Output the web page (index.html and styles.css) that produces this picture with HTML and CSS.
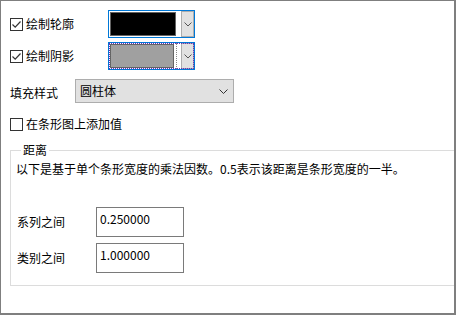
FILE: index.html
```html
<!DOCTYPE html>
<html>
<head>
<meta charset="utf-8">
<link rel="stylesheet" href="styles.css">
</head>
<body>
<div class="frame">
  <div class="row row-outline">
    <label class="check">
      <span class="box"><svg width="11" height="11" viewBox="0 0 11 11"><polyline points="1.5,5.5 4.2,8.2 9.5,2.5" fill="none" stroke="#333" stroke-width="1.2"/></svg></span>
      <span class="text">绘制轮廓</span>
    </label>
    <div class="color-combo">
      <span class="swatch swatch-black"></span>
      <span class="drop"><svg width="8" height="5" viewBox="0 0 8 5"><polyline points="0.5,0.5 4,4 7.5,0.5" fill="none" stroke="#555" stroke-width="1"/></svg></span>
    </div>
  </div>
  <div class="row row-shadow">
    <label class="check">
      <span class="box"><svg width="11" height="11" viewBox="0 0 11 11"><polyline points="1.5,5.5 4.2,8.2 9.5,2.5" fill="none" stroke="#333" stroke-width="1.2"/></svg></span>
      <span class="text">绘制阴影</span>
    </label>
    <div class="color-combo focused">
      <span class="swatch-wrap"><span class="swatch swatch-gray"></span></span>
      <span class="drop"><svg width="8" height="5" viewBox="0 0 8 5"><polyline points="0.5,0.5 4,4 7.5,0.5" fill="none" stroke="#555" stroke-width="1"/></svg></span>
    </div>
  </div>
  <div class="row row-fill">
    <span class="fill-label">填充样式</span>
    <div class="combo">
      <span class="combo-text">圆柱体</span>
      <svg class="chev" width="9" height="5" viewBox="0 0 9 5"><polyline points="0.5,0.5 4.5,4.5 8.5,0.5" fill="none" stroke="#333" stroke-width="1"/></svg>
    </div>
  </div>
  <div class="row row-values">
    <label class="check">
      <span class="box"></span>
      <span class="text">在条形图上添加值</span>
    </label>
  </div>
  <fieldset class="group">
    <legend>距离</legend>
    <p class="desc">以下是基于单个条形宽度的乘法因数。0.5表示该距离是条形宽度的一半。</p>
    <div class="fields">
      <span class="field-label">系列之间</span>
      <div class="textbox">0.250000</div>
      <span class="field-label">类别之间</span>
      <div class="textbox">1.000000</div>
    </div>
  </fieldset>
</div>
</body>
</html>
```

FILE: styles.css
```css
html, body {
  margin: 0;
  padding: 0;
  background: #fff;
}
body {
  font-family: "Noto Sans CJK SC", "Microsoft YaHei", "Noto Sans", sans-serif;
  font-size: 12px;
  color: #000;
}
.frame {
  width: 456px;
  height: 315px;
  box-sizing: border-box;
  border: 1px solid #7f7f7f;
  border-right-width: 2px;
  border-bottom-width: 2px;
  overflow: hidden;
}
.row {
  display: flex;
  align-items: center;
}
.row-outline {
  margin-top: 9px;
  height: 28px;
}
.row-shadow {
  margin-top: 4px;
  height: 28px;
}
.check {
  display: flex;
  align-items: center;
  padding-left: 9px;
  width: 98px;
  line-height: 16px;
}
.box {
  width: 11px;
  height: 11px;
  border: 1px solid #333;
  margin-right: 3px;
  display: flex;
  align-items: center;
  justify-content: center;
  background: #fff;
}
.color-combo {
  width: 85px;
  height: 26px;
  border: 1px solid #0078d7;
  display: flex;
  align-items: stretch;
}
.swatch {
  display: block;
  box-sizing: border-box;
  border: 1px solid #646464;
}
.color-combo > .swatch {
  width: 66px;
  margin: 1px 5px 1px 1px;
}
.swatch-black {
  background: #000;
}
.color-combo.focused {
  outline: 1px dotted #6a2fb8;
  outline-offset: -2px;
}
.swatch-wrap {
  display: flex;
  width: 68px;
  padding: 1px;
  margin-right: 3px;
  box-sizing: border-box;
  border-right: 1px dotted #888;
}
.swatch-wrap .swatch {
  flex: 1;
  margin-right: 1px;
}
.swatch-gray {
  background: #a0a0a0;
}
.drop {
  width: 13px;
  box-sizing: border-box;
  border: 1px solid #adadad;
  background: #e1e1e1;
  display: flex;
  align-items: center;
  justify-content: center;
  margin-left: auto;
}
.row-fill {
  margin-top: 9px;
  height: 24px;
}
.fill-label {
  padding-left: 9px;
  width: 65px;
  line-height: 16px;
  margin-top: 4px;
}
.combo {
  width: 159px;
  height: 24px;
  box-sizing: border-box;
  border: 1px solid #adadad;
  background: #e1e1e1;
  display: flex;
  align-items: center;
  padding: 0 5px 0 4px;
}
.combo-text {
  flex: 1;
  line-height: 16px;
}
.chev {
  margin-top: 1px;
}
.row-values {
  margin-top: 13px;
  height: 16px;
}
.row-values .check {
  width: auto;
}
.group {
  margin: 10px 0 0 9px;
  width: 470px;
  box-sizing: border-box;
  border: 1px solid #dcdcdc;
  padding: 0 0 10px 5px;
  height: 144px;
}
.group legend {
  padding: 0 2px;
  margin-left: 5px;
  line-height: 16px;
}
.desc {
  margin: 3px 0 0 0;
  line-height: 16px;
}
.fields {
  display: grid;
  grid-template-columns: 80px 88px;
  row-gap: 6px;
  margin-top: 30px;
  align-items: center;
}
.field-label {
  padding-left: 1px;
  line-height: 16px;
}
.textbox {
  height: 30px;
  box-sizing: border-box;
  border: 1px solid #7a7a7a;
  padding: 3px 3px 0 3px;
  line-height: 16px;
  background: #fff;
}
```
